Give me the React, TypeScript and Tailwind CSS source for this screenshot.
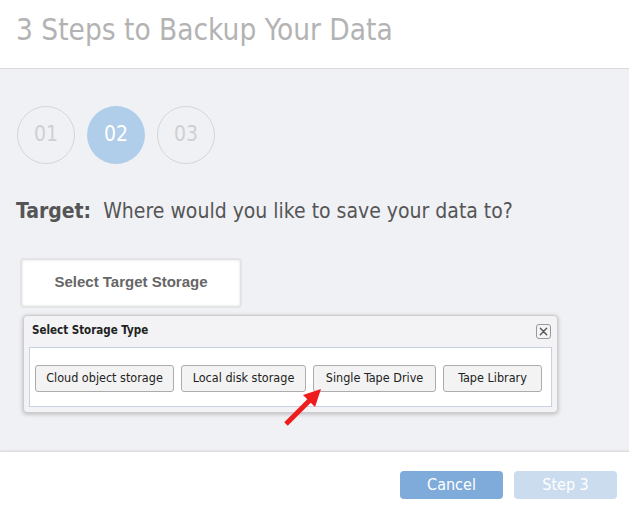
import React from 'react';

const body = "font-['DejaVu_Sans_Condensed','DejaVu_Sans',sans-serif] font-stretch-condensed";

function StepCircle({ label, active }: { label: string; active?: boolean }) {
  return (
    <div
      className={`flex h-[58px] w-[58px] items-center justify-center rounded-full text-[21px] ${
        active ? 'bg-[#b0cde9] text-white' : 'border border-[#d6d6d8] text-[#cfcfd2]'
      }`}
    >
      {label}
    </div>
  );
}

function TypeButton({ children, width }: { children: React.ReactNode; width: string }) {
  return (
    <button
      className={`${width} h-[27px] rounded-[3px] border border-[#acacac] bg-[#f3f3f3] text-[12.5px] text-[#222]`}
    >
      {children}
    </button>
  );
}

export default function App() {
  return (
    <div className={`relative flex h-[514px] w-[629px] flex-col bg-white ${body}`}>
      {/* header */}
      <div className="flex h-[69px] items-center border-b border-[#d9d9dc] px-[16px] pb-[8px] shadow-[0_1px_2px_rgba(0,0,0,0.06)]">
        <h1 className="text-[29.5px] font-normal text-[#b3b3b3]">3 Steps to Backup Your Data</h1>
      </div>

      {/* body */}
      <div className="flex flex-1 flex-col bg-[#f0f1f5] pt-[37px]">
        <div className="flex gap-[12px] pl-[17px]">
          <StepCircle label="01" />
          <StepCircle label="02" active />
          <StepCircle label="03" />
        </div>

        <p className="mt-[32px] pl-[16px] text-[21px] text-[#555]">
          <span className="font-['DejaVu_Sans',sans-serif] font-bold">Target:</span>
          <span>&nbsp; Where would you like to save your data to?</span>
        </p>

        <div className="ml-[20px] mt-[30px] flex h-[50px] w-[222px] items-center justify-center rounded-[4px] border-2 border-[#e4e4e6] bg-white shadow-[inset_0_0_3px_rgba(0,0,0,0.12)]">
          <span className="font-['Liberation_Sans',sans-serif] text-[15px] font-bold text-[#666]">
            Select Target Storage
          </span>
        </div>

        <div className="ml-[23px] mt-[7px] w-[535px] rounded-[4px] border border-[#cdcdd0] bg-[#f3f3f5] px-[5px] pb-[5px] shadow-[0_1px_4px_rgba(0,0,0,0.25)]">
          <div className="flex h-[31px] items-center justify-between pl-[3px] pr-[1px]">
            <span className="text-[11.5px] font-bold text-[#222]">Select Storage Type</span>
            <button className="flex h-[15px] w-[15px] items-center justify-center rounded-[3px] border border-[#999] bg-[#f4f4f4]">
              <svg viewBox="0 0 10 10" className="h-[9px] w-[9px]" stroke="#555" strokeWidth="1.6" strokeLinecap="round">
                <path d="M1.5 1.5L8.5 8.5M8.5 1.5L1.5 8.5" />
              </svg>
            </button>
          </div>
          <div className="flex h-[60px] items-center gap-[7px] border border-[#c9d1e0] bg-white pl-[5px] pt-[3px]">
            <TypeButton width="w-[139px]">Cloud object storage</TypeButton>
            <TypeButton width="w-[125px]">Local disk storage</TypeButton>
            <TypeButton width="w-[123px]">Single Tape Drive</TypeButton>
            <TypeButton width="w-[99px]">Tape Library</TypeButton>
          </div>
        </div>
      </div>

      {/* footer */}
      <div className="flex h-[63px] justify-end gap-[11px] border-t border-[#dcdcdf] pr-[12px] pt-[19px] shadow-[0_-1px_2px_rgba(0,0,0,0.05)]">
        <button className="h-[28px] w-[103px] rounded-[4px] bg-[#7eabda] text-[16px] text-white">Cancel</button>
        <button className="h-[28px] w-[103px] rounded-[4px] bg-[#cbdcef] text-[16px] text-white">Step 3</button>
      </div>

      {/* annotation arrow */}
      <svg className="pointer-events-none absolute left-[280px] top-[385px] h-[45px] w-[45px]" viewBox="0 0 45 45">
        <path d="M6 39L30 15" stroke="#ee1c1c" strokeWidth="5" strokeLinecap="butt" />
        <path d="M41 4L35 22L23 10Z" fill="#ee1c1c" />
      </svg>
    </div>
  );
}
